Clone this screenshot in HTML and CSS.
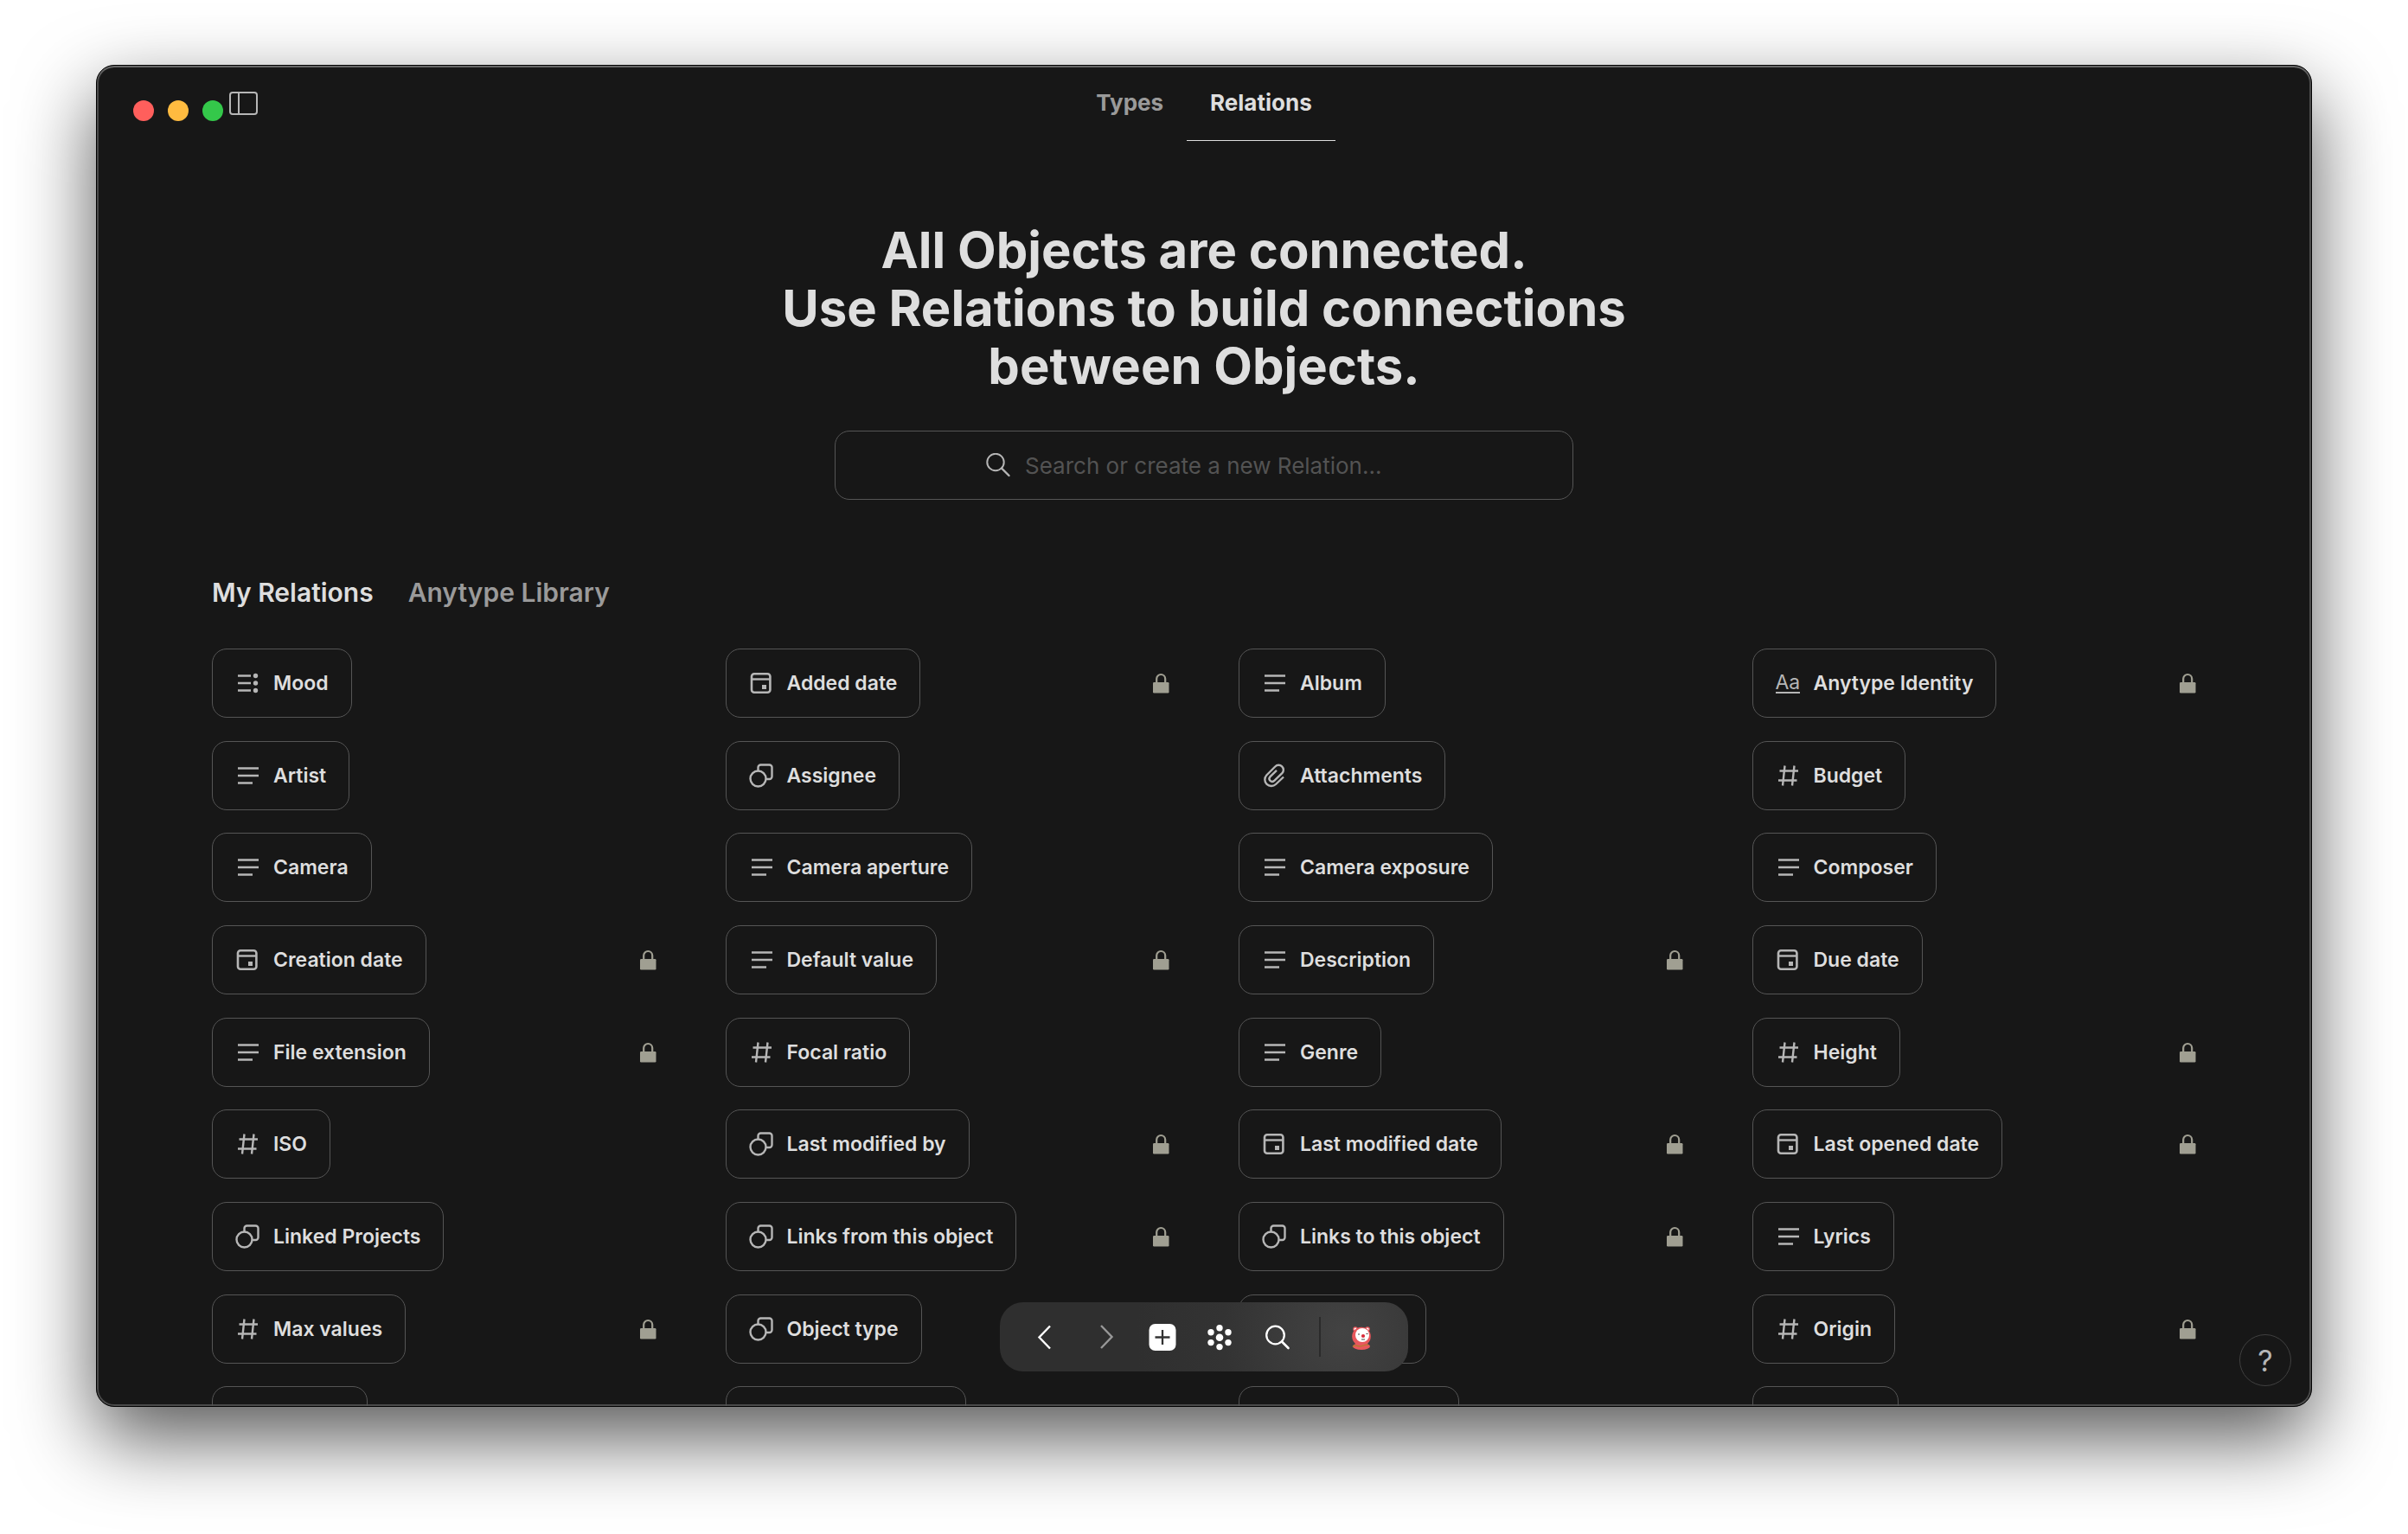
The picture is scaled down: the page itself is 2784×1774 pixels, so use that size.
FILE: index.html
```html
<!DOCTYPE html>
<html lang="en">
<head>
<meta charset="utf-8">
<title>Relations</title>
<link rel="stylesheet" href="styles.css">
</head>
<body>
<svg class="sprite" aria-hidden="true">
  <symbol id="text" viewBox="0 0 28 28"><path d="M3 5.500h24M3 14h24M3 22.500h17" stroke="currentColor" stroke-width="2.400" fill="none"/></symbol>
  <symbol id="status" viewBox="0 0 28 28"><path d="M3 5.500h15M3 14h15M3 22.500h15" stroke="currentColor" stroke-width="2.400" fill="none"/><circle cx="23.500" cy="5.500" r="2.700" fill="currentColor"/><circle cx="23.500" cy="14" r="2.700" fill="currentColor"/><circle cx="23.500" cy="22.500" r="2.700" fill="currentColor"/></symbol>
  <symbol id="date" viewBox="0 0 28 28"><rect x="3" y="3.200" width="21.400" height="21.600" rx="3" stroke="currentColor" stroke-width="2.600" fill="none"/><path d="M3 9.500h22" stroke="currentColor" stroke-width="2.400"/><rect x="15" y="16" width="5" height="5" fill="currentColor"/></symbol>
  <symbol id="object" viewBox="0 0 28 28"><circle cx="10.500" cy="17.500" r="9" stroke="currentColor" stroke-width="2.400" fill="none"/><path d="M10.500 8V4.500a3 3 0 0 1 3-3H23.500a3 3 0 0 1 3 3V15a3 3 0 0 1-3 3h-3.500" stroke="currentColor" stroke-width="2.400" fill="none"/></symbol>
  <symbol id="number" viewBox="0 0 28 28"><path d="M10.500 2.500 8 25.500M21.500 2.500 19 25.500M4.500 8.500h21.500M3 19.500h21.500" stroke="currentColor" stroke-width="2.400" fill="none"/></symbol>
  <symbol id="file" viewBox="0 0 28 28"><path d="M25 15.500 16 24a7.500 7.500 0 0 1-10.700-10.500L15.300 3.500a5.500 5.500 0 0 1 8 7.700L14 20a3.300 3.300 0 0 1-4.700-4.600L17 7.800" stroke="currentColor" stroke-width="2.400" fill="none"/></symbol>
  <symbol id="lock" viewBox="0 0 20 24"><rect x="1" y="11" width="18.500" height="12.500" rx="1.200" fill="currentColor"/><path d="M5.200 12V7a5 5 0 0 1 10 0V12" stroke="currentColor" stroke-width="2.200" fill="none"/></symbol>
  <symbol id="lens" viewBox="0 0 28 28"><circle cx="11" cy="10.500" r="9.700" stroke="currentColor" stroke-width="2" fill="none"/><path d="m18 17.500 8.500 8.500" stroke="currentColor" stroke-width="2.400" stroke-linecap="round"/></symbol>
</svg>

<div class="window">
  <header class="titlebar">
    <div class="controls">
      <button class="dot close" aria-label="Close"></button>
      <button class="dot minimize" aria-label="Minimize"></button>
      <button class="dot zoom" aria-label="Zoom"></button>
      <button class="sidebar" aria-label="Toggle sidebar"><svg viewBox="0 0 33 27"><rect x="1" y="1" width="31" height="25" rx="3" stroke="currentColor" stroke-width="2" fill="none"/><path d="M11 1v25" stroke="currentColor" stroke-width="2"/></svg></button>
    </div>
    <nav class="tabs">
      <a class="tab" href="#types">Types</a>
      <a class="tab active" href="#relations">Relations</a>
    </nav>
  </header>

  <main class="page">
    <h1 class="title">All Objects are connected.<br>Use Relations to build connections<br>between Objects.</h1>
    <label class="search">
      <svg class="icon"><use href="#lens"/></svg>
      <input type="text" placeholder="Search or create a new Relation..." aria-label="Search relations">
    </label>
    <nav class="sections">
      <a class="section active" href="#mine">My Relations</a>
      <a class="section" href="#library">Anytype Library</a>
    </nav>
    <ul class="list" id="list"></ul>
  </main>

  <div class="toolbar">
    <button class="tool" aria-label="Back"><svg viewBox="0 0 32 32"><path d="M20 3.500 7.500 16.500 20 29.500" stroke="currentColor" stroke-width="2.400" fill="none"/></svg></button>
    <button class="tool dim" aria-label="Forward"><svg viewBox="0 0 32 32"><path d="M12 3 24.500 16 12 29" stroke="currentColor" stroke-width="2.400" fill="none"/></svg></button>
    <button class="tool" aria-label="Create object"><svg viewBox="0 0 32 32"><rect x="0.500" y="1" width="31" height="31" rx="7" fill="currentColor"/><path d="M16 8v17M7.500 16.500h17" stroke="#333" stroke-width="2.300"/></svg></button>
    <button class="tool" aria-label="Graph"><svg viewBox="0 0 32 32"><g fill="currentColor"><circle cx="15" cy="16.700" r="4.300"/><circle cx="15" cy="5.800" r="3.700"/><circle cx="15" cy="27.600" r="3.700"/><circle cx="5" cy="10.800" r="3.700"/><circle cx="25" cy="10.800" r="3.700"/><circle cx="5" cy="22.600" r="3.700"/><circle cx="25" cy="22.600" r="3.700"/></g></svg></button>
    <button class="tool" aria-label="Search"><svg viewBox="0 0 32 32"><circle cx="12.500" cy="14" r="10.300" stroke="currentColor" stroke-width="2.300" fill="none"/><path d="m20 21.500 7.500 7.500" stroke="currentColor" stroke-width="2.600" stroke-linecap="round"/></svg></button>
    <span class="divider"></span>
    <button class="tool" aria-label="Space"><svg viewBox="0 0 32 32"><circle cx="9" cy="7" r="2.800" fill="#e8575c"/><circle cx="9" cy="7" r="1.600" fill="#fff"/><circle cx="23" cy="7" r="2.800" fill="#e8575c"/><circle cx="23" cy="7" r="1.600" fill="#fff"/><ellipse cx="16" cy="27" rx="10" ry="4" fill="#e8575c"/><circle cx="16" cy="15.500" r="10.800" fill="#e8575c"/><circle cx="17" cy="14" r="8" fill="#fff"/><circle cx="18" cy="15" r="2.100" fill="#d92b3a"/><path d="M12 13h2M21.500 12.500h2M16 19h4" stroke="#333" stroke-width="0.900"/><path d="M6 27.500c1-4 7 1 11-1s5-2 7-1" stroke="#b07f2c" stroke-width="1.200" fill="none"/></svg></button>
  </div>
  <button class="help" aria-label="Help">?</button>
</div>
<script src="script.js"></script>
</body>
</html>
```
FILE: styles.css
```css
* { box-sizing: border-box; }

body {
  margin: 0;
  height: 100vh;
  padding: 75px 111px 147px;
  background: #fff;
  color: #dedede;
  font-family: Inter, "Liberation Sans", sans-serif;
}

button {
  padding: 0;
  border: 0;
  background: none;
  color: inherit;
  font: inherit;
}

a { color: inherit; text-decoration: none; }
svg { display: block; }
.sprite { display: none; }

.window {
  position: relative;
  height: 100%;
  overflow: hidden;
  border: 1px solid #000;
  border-radius: 21px;
  background: #171717;
  box-shadow:
    inset 0 2px 0 #666,
    inset 0 0 0 2px #4a4a4a,
    0 36px 90px rgba(0, 0, 0, 0.66);
}

.titlebar {
  display: grid;
  grid-template-columns: 1fr auto 1fr;
  align-items: start;
  height: 87px;
  padding: 0 42px;
}

.controls { display: flex; align-items: center; gap: 16px; height: 104px; }
.dot { width: 24px; height: 24px; border-radius: 50%; }
.close { background: #ff5f5c; }
.minimize { background: #ffbb40; }
.zoom { background: #34c84a; }
.sidebar { width: 33px; height: 27px; margin: 0 0 17px -9px; color: #b6b6b6; }

.tabs { display: flex; height: 87px; }
.tab {
  padding: 0 27px;
  font-size: 26px;
  font-weight: 700;
  line-height: 86px;
  color: #9a9a9a;
}
.tab.active { border-bottom: 1px solid #dedede; color: #dedede; }

.page {
  display: flex;
  flex-direction: column;
  padding: 93px 133px 0;
}

.title {
  margin: 0 0 41px;
  font-size: 58px;
  font-weight: 700;
  line-height: 67px;
  text-align: center;
}

.search {
  display: grid;
  grid-template-columns: 1fr auto 1fr;
  align-items: center;
  align-self: center;
  gap: 17px;
  width: 854px;
  height: 80px;
  border: 1px solid #555;
  border-radius: 17px;
}
.search .icon { justify-self: end; width: 28px; height: 28px; color: #b6b6b6; }
.search input {
  width: 414px;
  padding: 0;
  border: 0;
  outline: 0;
  background: none;
  color: #dedede;
  font: inherit;
  font-size: 26px;
}
.search input::placeholder { color: #535353; opacity: 1; }

.sections {
  display: flex;
  gap: 40px;
  margin: 87px 0 45px;
  font-size: 30px;
  font-weight: 600;
  line-height: 40px;
}
.section { color: #9a9a9a; }
.section.active { color: #dedede; }

.list {
  display: grid;
  grid-template-columns: repeat(4, 1fr);
  grid-template-rows: repeat(3, 81px 80px 81px);
  gap: 26px 80px;
  margin: 0;
  padding: 0;
  list-style: none;
}
.item { display: flex; align-items: center; justify-content: space-between; height: 80px; }
.chip {
  display: flex;
  align-items: center;
  gap: 16px;
  height: 80px;
  padding: 0 26px;
  border: 1px solid #555;
  border-radius: 17px;
  font-size: 23px;
  font-weight: 600;
  white-space: nowrap;
}
.chip .icon { width: 28px; height: 28px; color: #b6b6b6; }
.letters {
  width: 28px;
  border-bottom: 2px solid #b6b6b6;
  color: #b6b6b6;
  font-size: 23px;
  font-weight: 400;
  line-height: 22px;
  text-align: center;
}
.lock { width: 20px; height: 24px; color: #a09f92; }

.toolbar {
  position: absolute;
  bottom: 40px;
  left: 50%;
  transform: translateX(-50%);
  display: flex;
  align-items: center;
  gap: 35px;
  height: 80px;
  padding: 0 38px;
  border-radius: 27px;
  background: radial-gradient(circle at 84% 45%, #434343, #333 35%, #2f2f2f 60%);
  color: #fff;
}
.tool svg { width: 32px; height: 32px; }
.dim { color: #989898; }
.divider { width: 2px; height: 46px; margin: 0 -4px; background: #2b2b2b; }

.help {
  position: absolute;
  right: 23px;
  bottom: 23px;
  width: 60px;
  height: 60px;
  border: 1px solid #404040;
  border-radius: 50%;
  color: #b6b6b6;
  font-size: 34px;
}
```
FILE: script.js
```js
const relations = [
  ["status", "Mood"], ["date", "Added date", 1], ["text", "Album"], ["letters", "Anytype Identity", 1],
  ["text", "Artist"], ["object", "Assignee"], ["file", "Attachments"], ["number", "Budget"],
  ["text", "Camera"], ["text", "Camera aperture"], ["text", "Camera exposure"], ["text", "Composer"],
  ["date", "Creation date", 1], ["text", "Default value", 1], ["text", "Description", 1], ["date", "Due date"],
  ["text", "File extension", 1], ["number", "Focal ratio"], ["text", "Genre"], ["number", "Height", 1],
  ["number", "ISO"], ["object", "Last modified by", 1], ["date", "Last modified date", 1], ["date", "Last opened date", 1],
  ["object", "Linked Projects"], ["object", "Links from this object", 1], ["object", "Links to this object", 1], ["text", "Lyrics"],
  ["number", "Max values", 1], ["object", "Object type"], 217, ["number", "Origin", 1],
  180, 278, 255, 169
];

// A bare number is a relation whose content is not loaded yet: only its outline is drawn.
document.getElementById("list").innerHTML = relations.map((relation) => {
  if (typeof relation === "number") {
    return `<li class="item"><span class="chip" style="width:${relation}px"></span></li>`;
  }
  const [icon, name, locked] = relation;
  const glyph = icon === "letters"
    ? '<span class="letters">Aa</span>'
    : `<svg class="icon"><use href="#${icon}"/></svg>`;
  const lock = locked ? '<svg class="lock"><use href="#lock"/></svg>' : "";
  return `<li class="item"><button class="chip">${glyph}${name}</button>${lock}</li>`;
}).join("");
```
